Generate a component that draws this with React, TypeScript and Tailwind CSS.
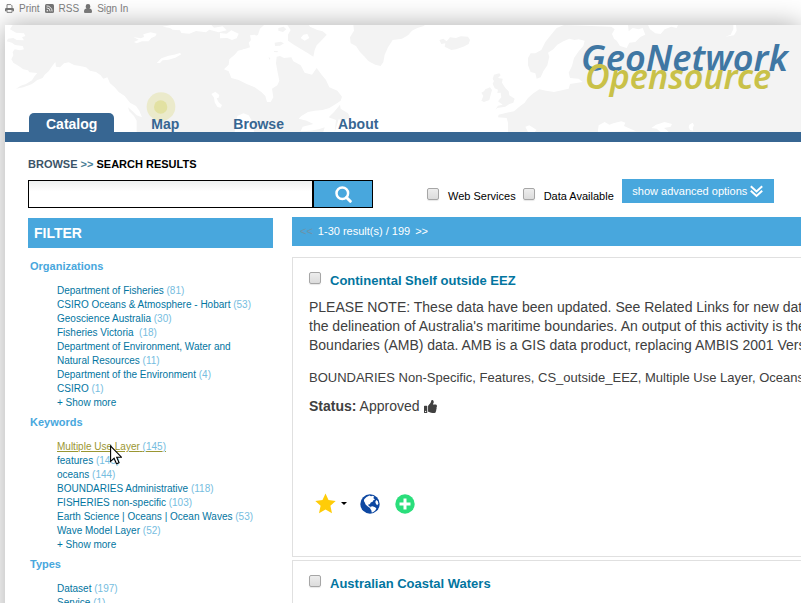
import React from "react";
import { FaThumbsUp } from "react-icons/fa";

type Facet = { name: string; count?: number; hovered?: boolean };

const organizations: Facet[] = [
  { name: "Department of Fisheries", count: 81 },
  { name: "CSIRO Oceans & Atmosphere - Hobart", count: 53 },
  { name: "Geoscience Australia", count: 30 },
  { name: "Fisheries Victoria\u00a0", count: 18 },
  { name: "Department of Environment, Water and Natural Resources", count: 11 },
  { name: "Department of the Environment", count: 4 },
  { name: "CSIRO", count: 1 },
  { name: "+ Show more" },
];

const keywords: Facet[] = [
  { name: "Multiple Use Layer", count: 145, hovered: true },
  { name: "features", count: 145 },
  { name: "oceans", count: 144 },
  { name: "BOUNDARIES Administrative", count: 118 },
  { name: "FISHERIES non-specific", count: 103 },
  { name: "Earth Science | Oceans | Ocean Waves", count: 53 },
  { name: "Wave Model Layer", count: 52 },
  { name: "+ Show more" },
];

const types: Facet[] = [
  { name: "Dataset", count: 197 },
  { name: "Service", count: 1 },
];

const checkboxClass =
  "size-3 shrink-0 appearance-none rounded-[2px] border border-[#a6a6a6] bg-linear-to-b from-[#ededed] to-[#dcdcdc] shadow-[0_1px_1px_#00000018]";

const tabClass = "rounded-t-[5px] px-[17px] pt-[3px]";

function PrintIcon() {
  return (
    <svg viewBox="0 0 9 9" className="size-[9px]" aria-hidden="true">
      <path d="M2 4V.6h3.800L7 1.800V4" fill="none" stroke="#6f6f6f" strokeWidth="0.9" />
      <path d="M1.200 4h6.600A1.200 1.200 0 0 1 9 5.200V7.300H7.400V6H1.600v1.300H0V5.200A1.200 1.200 0 0 1 1.200 4z" fill="#6f6f6f" />
      <path d="M2 6v2.400h5V6" fill="none" stroke="#6f6f6f" strokeWidth="0.9" />
    </svg>
  );
}

function RssIcon() {
  return (
    <svg viewBox="0 0 9 9" className="size-[9px]" aria-hidden="true">
      <rect width="9" height="9" rx="1.5" fill="#6f6f6f" />
      <circle cx="2.3" cy="6.7" r="0.8" fill="#fff" />
      <path d="M1.6 3.9a3.5 3.5 0 0 1 3.5 3.5M1.6 1.9a5.5 5.5 0 0 1 5.5 5.5" fill="none" stroke="#fff" strokeWidth="0.9" />
    </svg>
  );
}

function UserIcon() {
  return (
    <svg viewBox="0 0 8 9" className="h-[9px] w-2" aria-hidden="true">
      <path
        d="M4 0a2.300 2.300 0 0 1 2.300 2.400c0 .9-.4 1.700-1 2.100C7 4.500 8 5.700 8 7.400 8 8.400 7.400 9 6.500 9h-5C.6 9 0 8.400 0 7.400c0-1.700 1-2.900 2.700-2.900-.6-.4-1-1.200-1-2.100A2.300 2.300 0 0 1 4 0z"
        fill="#6f6f6f"
      />
    </svg>
  );
}

function GlobeIcon() {
  return (
    <svg viewBox="0 0 20 20" className="size-5" aria-hidden="true">
      <circle cx="10" cy="10" r="9.700" fill="#0d47a1" />
      <path
        d="M4.200 5.200L6.500 3l3-1.500 1.500.8 2-.6 1.200 1-1 1.200 1.800 1.500-1.600.8-.8 1.500-1.800.9-1 1.600-1.600.3.500 1.500 1.500.8.600 1.400-1.600-.6-2-1.700-1.600-1.300-.8-2.200-.9-1.500z"
        fill="#fff"
      />
      <path d="M10.500 12.800l2-.6 2.600 1 1.300 1.300-1.200 1.900-2.200 1.800-1.300.4-.3-2.200-1.300-1.800zM16.200 6l1.600 1.200.6 2.600-1.300 1.500-1.200-1.600-.6-1.700z" fill="#fff" />
    </svg>
  );
}

function WorldMap() {
  return (
    <svg
      viewBox="15 75 2388 321"
      preserveAspectRatio="xMinYMin slice"
      className="absolute inset-0 h-full w-full"
      aria-hidden="true"
    >
      <g fill="#f3f3f3">
        <path d="M38 75 L30 88 L48 98 L72 100 L76 108 L66 112 L72 121 L50 120 L40 114 L24 116 L20 124 L36 128 L45 135 L68 138 L72 148 L60 151 L44 148 L38 156 L40 166 L34 178 L40 188 L56 198 L70 208 L84 211 L88 217 L112 219 L104 228 L96 241 L78 252 L62 257 L48 266 L70 262 L96 252 L112 240 L128 234 L134 224 L146 214 L154 202 L166 186 L168 200 L180 202 L192 190 L206 187 L222 195 L240 198 L258 202 L270 212 L288 216 L302 226 L310 236 L322 232 L330 250 L344 262 L356 276 L374 288 L390 308 L408 318 L418 332 L426 352 L410 346 L398 334 L384 322 L388 334 L402 348 L410 362 L410 396 L970 396 L974 382 L956 388 L930 392 L902 394 L908 380 L940 372 L920 362 L896 356 L904 348 L924 336 L944 332 L968 330 L988 324 L1004 314 L1022 302 L1026 290 L1012 272 L988 262 L978 240 L966 226 L950 204 L936 224 L914 218 L902 196 L880 184 L874 172 L852 174 L840 168 L830 170 L828 190 L832 212 L838 242 L832 256 L816 266 L820 292 L812 306 L801 306 L796 288 L784 276 L764 262 L740 252 L716 240 L694 234 L686 214 L672 208 L686 194 L688 178 L704 164 L714 152 L732 148 L750 142 L746 128 L760 112 L774 104 L780 86 L792 75Z" />
        <path d="M862 75 L872 90 L864 104 L864 122 L884 136 L904 148 L924 160 L940 170 L944 150 L950 136 L962 124 L980 104 L968 94 L952 90 L930 80 L926 75Z" />
        <path d="M835 84l16-4 8 8-10 8-14-4zM824 128l18-3 10 5-12 7-15 1zM822 153h12l-2 4-10-1zM806 172l5 2-3 6z" />
        <path d="M1060 75 L1062 92 L1050 112 L1052 130 L1068 138 L1080 156 L1094 170 L1106 184 L1126 194 L1142 198 L1150 186 L1154 164 L1164 142 L1178 120 L1206 116 L1224 106 L1236 92 L1252 84 L1272 78 L1274 75Z" />
        <path d="M1318 120l12-4 10 8 10-12 18 2 14-5 22 1 6 10-4 12-16 8-22 8-14 2-20-10 2-10-12 2z" />
        <path d="M1482 224l16-4 4 6-8 8 14 2-2 12 10 16 10 10 2 12 16 10-4 12-12 4-12 8-24 4-6 5 8-12 14-3-14-10 10-12-2-14-10 1 2-10-10-4-6-14 4-8-4-6z" />
        <path d="M1456 268l14-6 6 8-4 14-4 16-16 6-8-4 6-14-6-10 8-4z" />
        <path d="M1004 396l4-36-22-8 16-16 18-22 2 12 22 14 6 12-18 10-16-4z" />
      </g>
      <path
        fill="#f3f3f3"
        d="M1692 75 L1670 84 L1652 106 L1636 126 L1624 150 L1606 160 L1592 160 L1584 174 L1584 196 L1592 216 L1606 220 L1610 236 L1622 232 L1630 214 L1642 196 L1648 170 L1644 158 L1660 148 L1672 134 L1690 124 L1708 116 L1724 120 L1736 118 L1754 122 L1750 138 L1736 154 L1722 174 L1716 198 L1706 218 L1710 234 L1736 236 L1748 246 L1710 252 L1706 266 L1662 276 L1638 272 L1618 268 L1600 280 L1584 294 L1574 308 L1558 320 L1542 334 L1520 338 L1496 344 L1494 352 L1520 354 L1524 368 L1524 396 L2403 396 L2403 75 L2208 75 L2210 92 L2202 106 L2176 110 L2192 104 L2200 88 L2200 75 L2034 75 L2030 84 L2014 80 L1994 88 L1982 102 L1966 100 L1950 88 L1944 75 L1884 75 L1886 94 L1898 84 L1916 88 L1928 84 L1936 104 L1922 110 L1906 126 L1888 128 L1880 144 L1860 138 L1850 122 L1842 116 L1836 102 L1844 88 L1834 80Z"
      />
      <g fill="#fff">
        <path d="M400 111l22 4 10-4-2-8 22-6 18 4-4 8-12 5-8 10-20 0-16 6-8-4 14-7zM470 189l14-14 22-8 16-3 18-5 4 4-18 10-20 6-18 2-8 8zM634 282l12-7 12 10-2 8-6 2 6 12 10 8-4 8-10-2-8-14-2-14z" />
        <path d="M488 80l26-5h120l8 8 26-4 12 12-24 6-28-8-10 8-30-4-20 8-24-2-4-8-22-2-8-5zM660 99l20 2 14-10 22 10-6 14-14 5-14-6-22 1zM750 106l14-2 16 10-12 10-14 2zM910 104l12-2 6 12-14 8-12-8z" />
        <path d="M712 348l18-8 16 6 12 20 4 30h-58zM768 380l14-5 16 8-16 8z" />
        <path d="M1794 390l2-14 18-10 14 8 12-4 24-6 12 4-4 10 22 10 14 6h-16l-98 2zM1954 384l14-10 26-8 22 6-4 8-20 4 8 6 6 6h-24l-12-10zM2068 374l10-6 4 8-4 8 2 8-10-2-4-8z" />
        <path d="M1576 380l12-4 22 14-6 6h-20zM728 148l16-1-2 8-12 1z" />
      </g>
      <circle cx="483" cy="320" r="43" fill="#ebeacb" />
      <circle cx="482" cy="321" r="20" fill="#e2e1a2" />
    </svg>
  );
}

function FacetGroup({ title, items }: { title: string; items: Facet[] }) {
  return (
    <section className="mb-[5px]">
      <h3 className="pl-0.5 text-[11px]/[14px] font-bold text-[#48a7dd]">{title}</h3>
      <ul className="mt-[11px] pr-3 pl-[29px] text-[10px]/[14px]">
        {items.map((item, i) => (
          <li key={i} className="max-w-[200px]">
            <a href="#" className={item.hovered ? "text-[#9a9632] underline" : "text-[#02759f]"}>
              {item.name}
              {item.count !== undefined && (
                <>
                  {" "}
                  <span className="text-[#76bde0]">({item.count})</span>
                </>
              )}
            </a>
          </li>
        ))}
      </ul>
    </section>
  );
}

function ResultTitle({ title }: { title: string }) {
  return (
    <label className="flex gap-[9px]">
      <input type="checkbox" className={checkboxClass} />
      <h2 className="mt-px text-[13px]/[16px] font-bold text-[#02759f]">
        <a href="#">{title}</a>
      </h2>
    </label>
  );
}

export default function App() {
  return (
    <div className="h-screen overflow-hidden bg-white font-['Liberation_Sans',Arial,sans-serif]">
      <div className="flex h-[25px] items-start gap-[5px] pt-0.5 pl-[5px] text-[10px]/[13px] text-[#777]">
        <a href="#" className="flex items-center gap-[5px]">
          <PrintIcon /> Print
        </a>
        <a href="#" className="flex items-center gap-[5px]">
          <RssIcon /> RSS
        </a>
        <a href="#" className="flex items-center gap-[5px]">
          <UserIcon /> Sign In
        </a>
      </div>

      <div className="relative ml-[5px] min-h-full bg-white shadow-[0_0_25px_#aaa]">
        <header className="relative flex h-[117px] items-end border-b-10 border-[#376692]">
          <WorldMap />
          <nav className="relative flex gap-5 pl-6 text-[14px]/[16px] font-bold text-[#376692]">
            <a href="#" className={`${tabClass} bg-[#376692] text-white`}>Catalog</a>
            <a href="#" className={tabClass}>Map</a>
            <a href="#" className={tabClass}>Browse</a>
            <a href="#" className={tabClass}>About</a>
          </nav>
          <div className="relative mr-2 mb-9 ml-auto h-[58px] w-[212px] font-['Noto_Sans',sans-serif] font-semibold italic">
            <div className="text-[36px]/[40px] text-[#4077a3]">GeoNetwork</div>
            <div className="-mt-[22px] pl-1 text-[34px]/[40px] text-[#c9c148]">Opensource</div>
          </div>
        </header>

        <main className="pt-[15px] pl-[23px]">
          <div className="text-[11px]/[14px] font-bold text-black">
            <a href="#" className="text-[#3b5468]">BROWSE</a> <span className="text-[#4a7f96]">&gt;&gt;</span> SEARCH RESULTS
          </div>

          <form className="mt-2 flex h-[30px] items-start" onSubmit={(e) => e.preventDefault()}>
            <div className="mt-px flex h-7 w-[345px]">
              <input
                type="text"
                aria-label="Search"
                className="w-[285px] border border-black bg-linear-to-b from-[#edf0f0] to-white to-40% px-2 text-[13px] outline-none"
              />
              <button
                type="submit"
                aria-label="Search"
                className="flex flex-1 items-center justify-center border border-black bg-[#48a7dd]"
              >
                <svg viewBox="0 0 17 17" className="size-[17px]" fill="none" stroke="#fff" strokeWidth="2.500" aria-hidden="true">
                  <circle cx="7.300" cy="7.300" r="5.800" />
                  <path d="M11.500 11.500l3.800 3.800" strokeWidth="3" strokeLinecap="round" />
                </svg>
              </button>
            </div>
            <label className="mt-[9px] ml-[54px] flex gap-[9px] text-[11px]/[16px] text-black">
              <input type="checkbox" className={checkboxClass} />
              Web Services
            </label>
            <label className="mt-[9px] ml-[7px] flex gap-[9px] text-[11px]/[16px] text-black">
              <input type="checkbox" className={checkboxClass} />
              Data Available
            </label>
            <button
              type="button"
              className="ml-2 flex h-6 w-[152px] items-center justify-center gap-[3px] bg-[#48a7dd] text-[11px] whitespace-nowrap text-white"
            >
              show advanced options
              <svg viewBox="0 0 13 13" className="size-[13px]" fill="none" stroke="#fff" strokeWidth="2" aria-hidden="true">
                <path d="M.8 1.200l5.700 5.300 5.700-5.300M.8 5.700l5.700 5.300 5.700-5.300" />
              </svg>
            </button>
          </form>

          <div className="mt-2 flex gap-[19px]">
            <aside className="mt-px w-[245px] shrink-0">
              <h2 className="mb-[11px] bg-[#48a7dd] px-1.5 text-[14px]/[30px] font-bold text-white">FILTER</h2>
              <FacetGroup title="Organizations" items={organizations} />
              <FacetGroup title="Keywords" items={keywords} />
              <FacetGroup title="Types" items={types} />
            </aside>

            <section className="min-w-0 flex-1">
              <div className="flex gap-[5px] bg-[#48a7dd] pl-2 text-[11px]/[29px] text-white">
                <span className="text-[#6c93a9]">&lt;&lt;</span>
                <span>1-30 result(s) / 199</span>
                <a href="#">&gt;&gt;</a>
              </div>

              <article className="mt-[11px] h-[300px] overflow-hidden border border-r-0 border-[#e0e0e0] pt-3.5 pl-4 text-[14px]/[19px] whitespace-nowrap text-[#404040]">
                <ResultTitle title="Continental Shelf outside EEZ" />
                <p className="mt-[9px]">
                  PLEASE NOTE: These data have been updated. See Related Links for new data
                  <br />
                  the delineation of Australia's maritime boundaries. An output of this activity is the
                  <br />
                  Boundaries (AMB) data. AMB is a GIS data product, replacing AMBIS 2001 Version
                </p>
                <p className="mt-[13px] text-[13px]">
                  BOUNDARIES Non-Specific, Features, CS_outside_EEZ, Multiple Use Layer, Oceans
                </p>
                <p className="mt-2.5 flex items-center gap-1">
                  <span>
                    <b>Status:</b> Approved
                  </span>
                  <FaThumbsUp className="size-[13px]" />
                </p>
                <div className="mt-[77px] flex items-center pl-1.5">
                  <button type="button" aria-label="Rate" className="flex items-center gap-[5px]">
                    <svg viewBox="0 0 21 21" className="size-[21px]" aria-hidden="true">
                      <path
                        d="M10.500.5l3 6.600 7.200.8-5.300 4.900 1.600 7.500-6.500-3.700-6.500 3.700 1.600-7.500L.3 7.900l7.200-.8z"
                        fill="#ffcc08"
                      />
                    </svg>
                    <svg viewBox="0 0 6 3" className="h-[3px] w-1.5" aria-hidden="true">
                      <path d="M0 0h6L3 3z" fill="#000" />
                    </svg>
                  </button>
                  <button type="button" aria-label="View on map" className="ml-[13px]">
                    <GlobeIcon />
                  </button>
                  <button type="button" aria-label="Add" className="ml-[15px]">
                    <svg viewBox="0 0 20 20" className="size-5" aria-hidden="true">
                      <circle cx="10" cy="10" r="9.700" fill="#2ade7b" />
                      <path d="M10 4.500v11M4.500 10h11" stroke="#fff" strokeWidth="3" />
                    </svg>
                  </button>
                </div>
              </article>

              <article className="mt-[3px] h-[300px] border border-r-0 border-[#e0e0e0] pt-3.5 pl-4">
                <ResultTitle title="Australian Coastal Waters" />
              </article>
            </section>
          </div>
        </main>
      </div>

      <svg viewBox="0 0 12 20" className="absolute top-[445px] left-[110px] h-5 w-3" aria-hidden="true">
        <path d="M.6 1v15.500l3.500-3.300 2.400 5.600 2.600-1.100-2.400-5.500h4.800z" fill="#fff" stroke="#000" strokeWidth="1.100" />
      </svg>
    </div>
  );
}
